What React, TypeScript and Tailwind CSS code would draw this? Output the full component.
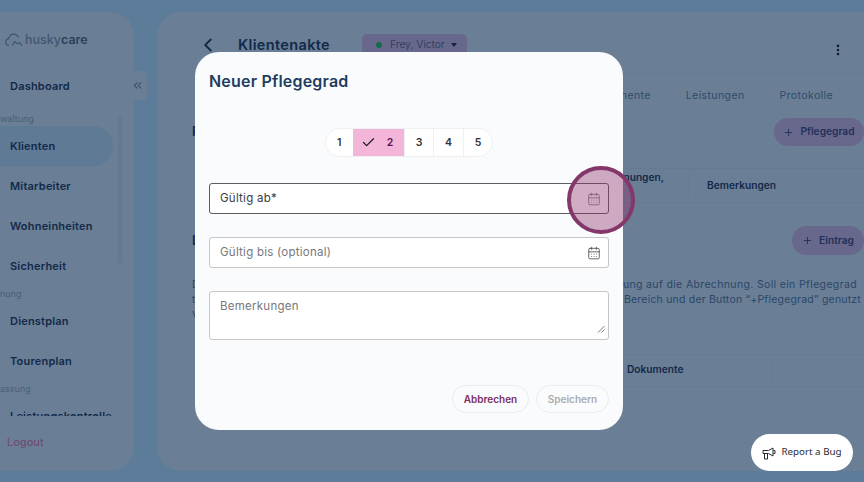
import { CalendarDays, ChevronLeft, ChevronsLeft, Check, EllipsisVertical, Plus } from "lucide-react";

function NavRow({ label, active }: { label: string; active?: boolean }) {
  return (
    <div
      className={
        "flex h-[40px] shrink-0 items-center pl-[10px] text-[11px] font-semibold tracking-[0.2px] text-[#12294a] " +
        (active ? "w-[113px] rounded-r-[20px] bg-[#5e7a94]" : "")
      }
    >
      {label}
    </div>
  );
}

function NavLabel({ label }: { label: string }) {
  return <div className="flex h-[15px] shrink-0 items-center text-[9px] text-[#4a6076]">{label}</div>;
}

function Sidebar() {
  const logo = (
    <svg width="18" height="14" viewBox="0 0 18 14" fill="none" stroke="#41566f" strokeWidth="1.2">
      <path d="M4 12.500c-2-.2-3.300-1.700-3.300-3.500 0-1.800 1.300-3.200 3-3.400C4.300 3 6.300 1.200 8.600 1.200c2.200 0 4 1.300 4.800 3.300" />
      <path d="M7 12.800l2.600-4.200 2.400 2.200 2.800-1.200 2 3" />
    </svg>
  );
  return (
    <aside className="relative flex h-full w-[134px] shrink-0 flex-col rounded-r-[24px] bg-[#6a7f95] pt-[16px]">
      <div className="flex h-[24px] items-center gap-[2px] pl-[5px] text-[12.500px] font-semibold text-[#2e4058]">
        {logo}
        <span>
          <span className="font-medium text-[#41566f]">husky</span>care
        </span>
      </div>
      <nav className="mt-[14px] flex h-[350px] flex-col overflow-hidden">
        <NavRow label="Dashboard" />
        <div className="h-[5px] shrink-0" />
        <NavLabel label="waltung" />
        <NavRow label="Klienten" active />
        <NavRow label="Mitarbeiter" />
        <NavRow label="Wohneinheiten" />
        <NavRow label="Sicherheit" />
        <NavLabel label="nung" />
        <NavRow label="Dienstplan" />
        <NavRow label="Tourenplan" />
        <NavLabel label="assung" />
        <NavRow label="Leistungskontrolle" />
      </nav>
      <div className="mt-[18px] pl-[7px] text-[11px] font-medium text-[#6f4d73]">Logout</div>
      {/* collapse tab and list scrollbar sit over the panel edge */}
      <div className="absolute left-[127px] top-[59px] flex h-[29px] w-[20px] items-center justify-center rounded-r-[6px] bg-[#6a7f95]">
        <ChevronsLeft size={13} color="#12294a" strokeWidth={1.600} />
      </div>
      <div className="absolute left-[118px] top-[104px] h-[147px] w-[4px] rounded-full bg-[#647a90]" />
    </aside>
  );
}

function TableCell({ children, className }: { children?: React.ReactNode; className?: string }) {
  return <div className={"flex h-full items-center text-[10.200px] font-semibold text-[#12294a] " + (className ?? "")}>{children}</div>;
}

function MainPanel() {
  return (
    <main className="ml-[23px] flex h-full w-[730px] shrink-0 flex-col rounded-l-[24px] bg-[#6a7f95] pl-[35px] pr-[23px] pt-[21px]">
      <div className="flex h-[24px] items-center">
        <ChevronLeft size={22} color="#12294a" className="ml-[5px]" />
        <h1 className="ml-[19px] text-[14.500px] font-semibold tracking-[0.35px] text-[#12294a]">Klientenakte</h1>
        <div className="ml-[32px] flex h-[22px] w-[105px] items-center rounded-[5px] bg-[#68688c] pl-[14px] text-[10.200px] text-[#33405f]">
          <span className="mr-[8px] h-[6px] w-[6px] rounded-full bg-[#136b4a]" />
          Frey, Victor
          <span className="ml-[6px] h-0 w-0 border-x-[3.500px] border-t-[4px] border-x-transparent border-t-[#17223d]" />
        </div>
        <EllipsisVertical size={14} color="#121c32" strokeWidth={2.500} className="ml-auto mr-[19px] mt-[10px]" />
      </div>

      <div className="mt-[16px] flex h-[45px] items-center justify-end gap-[35px] border-t border-[#667b91] pr-[31px] text-[10.500px] tracking-[0.4px] text-[#2d4b6c]">
        <span>Dokumente</span>
        <span>Leistungen</span>
        <span>Protokolle</span>
      </div>

      <div className="flex h-[28px] items-center justify-between">
        <h2 className="text-[13px] font-semibold text-[#12294a]">Pflegegrad</h2>
        <button className="flex h-full w-[90px] items-center justify-center gap-[6px] rounded-full bg-[#68688c] text-[10.200px] font-semibold text-[#22305a]">
          <Plus size={11} strokeWidth={2} />
          Pflegegrad
        </button>
      </div>

      <div className="mt-[22px] flex h-[35px] border-y border-[#667b91]">
        <TableCell className="w-[496px] justify-end pb-[15px] pr-[24px]">Verordnungen,</TableCell>
        <div className="my-[5px] w-px bg-[#667b91]" />
        <TableCell className="pl-[18px]">Bemerkungen</TableCell>
      </div>

      <div className="mt-[23px] flex h-[29px] items-center justify-between">
        <h2 className="text-[13px] font-semibold text-[#12294a]">Leistungen</h2>
        <button className="flex h-full w-[72px] items-center justify-center gap-[6px] rounded-full bg-[#68688c] text-[10.200px] font-semibold text-[#22305a]">
          <Plus size={11} strokeWidth={2} />
          Eintrag
        </button>
      </div>

      <div className="mt-[23px] flex flex-col text-[10.500px] leading-[14.500px] text-[#2a466a]">
        <p className="flex justify-between whitespace-nowrap pr-[7px] tracking-[0.35px]">
          <span>Der</span>
          <span>Auswirkung auf die Abrechnung. Soll ein Pflegegrad</span>
        </p>
        <p className="flex justify-between whitespace-nowrap pr-[3px] tracking-[0.2px]">
          <span>te</span>
          <span>Bereich und der Button “+Pflegegrad” genutzt</span>
        </p>
        <p>
          <span>v</span>
        </p>
      </div>

      <div className="mt-[32px] flex h-[33px] border-y border-[#667b91]">
        <TableCell className="w-[435px]" />
        <TableCell className="w-[145px]">Dokumente</TableCell>
        <div className="my-[5px] w-px bg-[#667b91]" />
      </div>
    </main>
  );
}

function Field({ label, strong }: { label: string; strong?: boolean }) {
  return (
    <div
      className={
        "flex h-[31px] items-center justify-between rounded-[3px] border bg-white pl-[10px] pr-[7px] text-[11.500px] tracking-[0.25px] " +
        (strong ? "border-[#5c5c62] text-[#3b3b40]" : "border-[#c6c6c8] text-[#77777b]")
      }
    >
      {label}
      <CalendarDays size={14} color={strong ? "#77777b" : "#4a4a4e"} strokeWidth={1.400} />
    </div>
  );
}

function PflegegradModal() {
  const steps = [1, 3, 4, 5];
  return (
    <div className="absolute left-[195px] top-[52px] flex h-[378px] w-[428px] flex-col rounded-[24px] bg-[#fafbfd] px-[14px] pt-[19px]">
      <h2 className="text-[16px] font-semibold leading-[20px] tracking-[0.2px] text-[#1f3d5e]">Neuer Pflegegrad</h2>

      <div className="mt-[37px] flex h-[29px] self-center overflow-hidden rounded-full border border-[#eef0f3] bg-white text-[10.500px] font-semibold text-[#33333a]">
        <span className="flex w-[27px] items-center justify-center">{steps[0]}</span>
        <span className="flex w-[51px] items-center gap-[11px] bg-[#f3b5d8] pl-[8px] text-[#5c1748]">
          <Check size={15} color="#1c1c24" strokeWidth={2} />2
        </span>
        {steps.slice(1).map((n) => (
          <span key={n} className="flex w-[29.500px] items-center justify-center border-l border-[#eef0f3]">
            {n}
          </span>
        ))}
      </div>

      <div className="mt-[26px] flex flex-col gap-[23px]">
        <Field label="Gültig ab*" strong />
        <Field label="Gültig bis (optional)" />
        <div className="relative h-[49px] rounded-[3px] border border-[#c6c6c8] bg-white pl-[10px] pt-[6px] text-[11.500px] tracking-[0.25px] text-[#77777b]">
          Bemerkungen
          <svg width="8" height="8" viewBox="0 0 8 8" className="absolute bottom-[6px] right-[3px]" stroke="#55555a" strokeWidth="0.8">
            <path d="M1 7.500 7.500 1M4.500 7.500 7.500 4.500" />
          </svg>
        </div>
      </div>

      <div className="mt-[45px] flex justify-end gap-[7px] text-[10px] font-semibold">
        <button className="h-[28px] w-[77px] rounded-full border border-[#eaecf0] text-[#7b2e5f]">Abbrechen</button>
        <button className="h-[28px] w-[73px] rounded-full border border-[#eaecf0] text-[#a9abb0]">Speichern</button>
      </div>
    </div>
  );
}

export default function App() {
  return (
    <div className="relative flex h-[482px] w-[864px] overflow-hidden bg-[#5d7c99] py-[12px] pb-[11px] font-['Inter',sans-serif]">
      <Sidebar />
      <MainPanel />
      <PflegegradModal />
      {/* click highlight from the recording */}
      <div className="absolute left-[567px] top-[166px] h-[68px] w-[68px] rounded-full border-[4px] border-[#84386a] bg-[#8c326a]/40" />
      <button className="absolute left-[751px] top-[434px] flex h-[37px] w-[102px] items-center justify-center gap-[5px] rounded-full bg-white font-['Noto_Sans',sans-serif] text-[9.800px] text-[#2a2a2e]">
        <svg width="14" height="14" viewBox="0 0 14 14" fill="none" stroke="#2a2a2e" strokeWidth="1" strokeLinejoin="round">
          <path d="M1 4.500h5.500L11 2v8L6.500 7.500H1z" />
          <path d="M2.500 7.500v5.500h3V7.500" />
          <path d="M11.500 4.500h1.500v3h-1.500" />
        </svg>
        Report a Bug
      </button>
    </div>
  );
}
